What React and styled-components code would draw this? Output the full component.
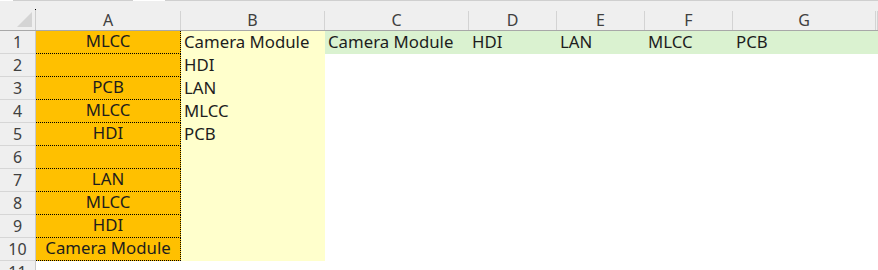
import React from "react";
import styled, { createGlobalStyle } from "styled-components";

const COLS = "36px 145px 144px 144px 88px 88px 88px 143px 1fr";

const GlobalStyle = createGlobalStyle`
  html, body { margin: 0; padding: 0; background: #ffffff; }
  body { overflow: hidden; font-family: "Noto Sans", "Open Sans", sans-serif; }
  * { box-sizing: border-box; }
`;

const Sheet = styled.div`
  width: 878px;
  height: 270px;
  overflow: hidden;
  background: #ffffff;
  display: flex;
  flex-direction: column;
`;

const TopStrip = styled.div`
  height: 1px;
  display: flex;
  flex-shrink: 0;
  background: #efefef;
`;

const StripSegment = styled.div`
  width: ${(p) => p.$w}px;
  flex: ${(p) => (p.$grow ? 1 : "none")};
  background: ${(p) => (p.$gap ? "#ffffff" : "#cfcfcf")};
`;

const HeaderRow = styled.div`
  display: grid;
  grid-template-columns: ${COLS};
  height: 30px;
  flex-shrink: 0;
  background: #efefef;
  border-bottom: 1px solid #a8a8a8;
`;

const Corner = styled.div`
  position: relative;
  display: flex;
  align-items: flex-end;
  justify-content: flex-end;
  padding: 0 2px 2px 0;
`;

const CornerLine = styled.div`
  align-self: flex-end;
  height: 20px;
  width: 1px;
  background: #cdcdcd;
  margin-left: 2px;
  margin-right: -2px;
  margin-bottom: -2px;
`;

const Dot = styled.span`
  position: absolute;
  right: 0;
  top: 8px;
  width: 1px;
  height: 1px;
  background: #000;
`;

const ColHeader = styled.div`
  align-self: end;
  height: 19px;
  border-right: 1px solid #d3d3d3;
  display: flex;
  align-items: center;
  justify-content: center;
  font-size: 16px;
  color: #404040;
  line-height: 1;
  padding-bottom: 1px;
`;

const Row = styled.div`
  display: grid;
  grid-template-columns: ${COLS};
  height: 23px;
  flex-shrink: 0;
`;

const RowHeader = styled.div`
  background: #efefef;
  border-right: 1px solid #c9c9c9;
  border-bottom: 1px solid #d6d6d6;
  display: flex;
  align-items: center;
  justify-content: center;
  font-size: 16px;
  color: #404040;
  line-height: 1;
`;

const FILLS = {
  orange: "#ffc000",
  yellow: "#ffffcc",
  green: "#daf2d0",
  none: "transparent",
};

const Cell = styled.div`
  background: ${(p) => FILLS[p.$fill || "none"]};
  display: flex;
  align-items: center;
  justify-content: ${(p) => (p.$center ? "center" : "flex-start")};
  padding: 0 3px 1px;
  font-size: 16.8px;
  line-height: 1;
  color: #1d1d1d;
  white-space: nowrap;
  overflow: visible;
  border-right: ${(p) => (p.$dotted ? "1px dotted #000" : "none")};
  border-bottom: ${(p) => (p.$dotted ? "1px dotted #000" : "none")};
`;

const colLetters = ["A", "B", "C", "D", "E", "F", "G", ""];

const colA = ["MLCC", "", "PCB", "MLCC", "HDI", "", "LAN", "MLCC", "HDI", "Camera Module"];
const colB = ["Camera Module", "HDI", "LAN", "MLCC", "PCB", "", "", "", "", ""];
const row1Rest = ["Camera Module", "HDI", "LAN", "MLCC", "PCB", ""];

export default function App() {
  const rows = [];
  for (let i = 0; i < 11; i++) {
    const inData = i < 10;
    rows.push(
      <Row key={i}>
        <RowHeader>{i + 1}</RowHeader>
        <Cell $fill={inData ? "orange" : "none"} $center $dotted={inData}>
          {inData ? colA[i] : ""}
        </Cell>
        <Cell $fill={inData ? "yellow" : "none"}>{inData ? colB[i] : ""}</Cell>
        {[0, 1, 2, 3, 4, 5].map((c) => (
          <Cell key={c} $fill={i === 0 ? "green" : "none"}>
            {i === 0 ? row1Rest[c] : ""}
          </Cell>
        ))}
      </Row>
    );
  }

  return (
    <>
      <GlobalStyle />
      <Sheet>
        <TopStrip>
          <StripSegment $w={13} $gap />
          <StripSegment $w={120} />
          <StripSegment $w={32} $gap />
          <StripSegment $grow />
        </TopStrip>
        <HeaderRow>
          <Corner>
            <svg width="16" height="16" viewBox="0 0 16 16">
              <polygon points="15,0 15,15 0,15" fill="#d4d4d4" />
            </svg>
            <CornerLine />
            <Dot />
          </Corner>
          {colLetters.map((l, idx) => (
            <ColHeader key={idx}>{l}</ColHeader>
          ))}
        </HeaderRow>
        {rows}
      </Sheet>
    </>
  );
}
